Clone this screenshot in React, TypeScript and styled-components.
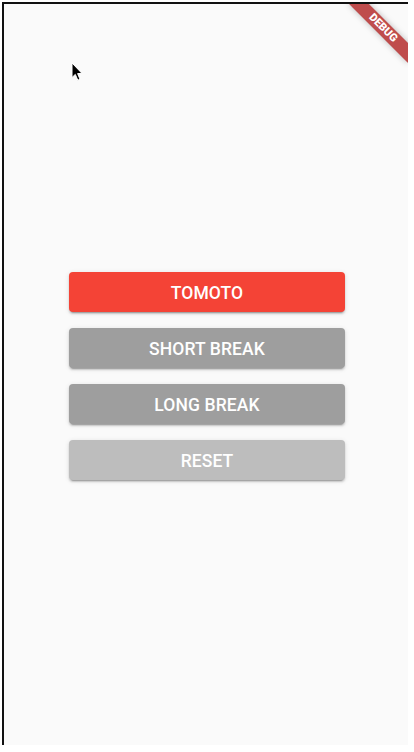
import styled, { createGlobalStyle } from "styled-components";

const GlobalStyle = createGlobalStyle`
  html, body {
    margin: 0;
    padding: 0;
    background: #ffffff;
  }
  body {
    font-family: Roboto, "Liberation Sans", sans-serif;
  }
`;

type Variant = "primary" | "secondary" | "muted";

const buttons: { label: string; variant: Variant }[] = [
  { label: "TOMOTO", variant: "primary" },
  { label: "SHORT BREAK", variant: "secondary" },
  { label: "LONG BREAK", variant: "secondary" },
  { label: "RESET", variant: "muted" },
];

export default function App() {
  return (
    <>
      <GlobalStyle />
      <Frame>
        <ButtonList>
          {buttons.map(b => (
            <TimerButton key={b.label} $variant={b.variant}>
              {b.label}
            </TimerButton>
          ))}
        </ButtonList>
        <Banner>DEBUG</Banner>
        <Cursor width="13" height="20" viewBox="0 0 13 20">
          <path
            d="M1 1 L1 15.5 L4.3 12.4 L6.8 18.2 L9 17.2 L6.6 11.6 L11 11.4 Z"
            fill="#000"
            stroke="#fff"
            strokeWidth="1"
            strokeLinejoin="round"
          />
        </Cursor>
      </Frame>
    </>
  );
}

const colors: Record<Variant, string> = {
  primary: "#f44336",
  secondary: "#9e9e9e",
  muted: "#bdbdbd",
};

const Frame = styled.div`
  position: relative;
  overflow: hidden;
  box-sizing: border-box;
  margin: 2px 0 0 2px;
  width: 406px;
  height: 743px;
  border-left: 2px solid #111;
  border-top: 2px solid #111;
  background: #fafafa;
  display: flex;
  align-items: center;
  justify-content: center;
`;

const ButtonList = styled.div`
  display: flex;
  flex-direction: column;
  gap: 16px;
  width: 276px;
  margin: 2px 0 0 2px;
`;

const TimerButton = styled.button<{ $variant: Variant }>`
  height: 40px;
  padding: 3px 0 0;
  border: none;
  border-radius: 4px;
  background: ${p => colors[p.$variant]};
  color: #ffffff;
  font-family: Roboto, "Liberation Sans", sans-serif;
  font-weight: 500;
  font-size: 17.5px;
  letter-spacing: 0.1px;
  cursor: pointer;
  box-shadow: 0 3px 1px -2px rgba(0, 0, 0, 0.2), 0 2px 2px 0 rgba(0, 0, 0, 0.14),
    0 1px 5px 0 rgba(0, 0, 0, 0.12);
`;

const Banner = styled.div`
  position: absolute;
  top: 17px;
  right: -17px;
  width: 84px;
  height: 14px;
  transform: rotate(45deg);
  background: rgba(176, 32, 32, 0.8);
  color: #ffffff;
  font-family: Roboto, "Liberation Sans", sans-serif;
  font-weight: 900;
  font-size: 11px;
  line-height: 14px;
  text-align: center;
  box-shadow: 0 0 6px rgba(0, 0, 0, 0.25);
`;

const Cursor = styled.svg`
  position: absolute;
  left: 67px;
  top: 58px;
`;
